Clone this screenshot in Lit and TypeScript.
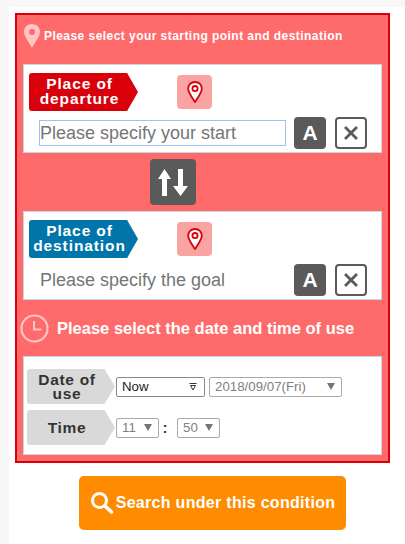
import { LitElement, html, css, svg } from "lit";
import { customElement } from "lit/decorators.js";

const pinIcon = html`<svg width="18" height="24" viewBox="0 0 18 24">
  <path d="M9 2C5 2 2.2 5 2.2 8.8 2.2 12.6 6 17.5 9 22c3-4.500 6.800-9.400 6.800-13.200C15.800 5 13 2 9 2z" fill="#fff" stroke="#d9000b" stroke-width="1.800" stroke-linejoin="round" />
  <circle cx="9" cy="8.600" r="2.600" fill="#fff" stroke="#d9000b" stroke-width="1.800" />
</svg>`;

const clearIcon = svg`<path d="M4 4l10 10M14 4L4 14" stroke="#5a5a5a" stroke-width="2.800" stroke-linecap="square" fill="none" />`;

@customElement("app-root")
export class AppRoot extends LitElement {
  static override styles = css`
    :host {
      display: block;
      height: 544px;
      overflow: hidden;
      background: #f7f7f7;
      font-family: "Liberation Sans", Arial, sans-serif;
    }

    .page {
      margin: 7px 0 0 9px;
      padding: 6px 15px 0 6px;
      height: 537px;
      box-sizing: border-box;
      background: #fff;
    }

    .panel {
      box-sizing: border-box;
      height: 450px;
      border: 2px solid #d9000b;
      background: #ff6b6b;
      padding: 0 6px;
      display: flex;
      flex-direction: column;
    }

    .heading {
      display: flex;
      align-items: center;
      height: 41px;
      margin: 0 0 8px 0;
      color: #fff;
      font-weight: bold;
      font-size: 12px;
      letter-spacing: 0.45px;
      gap: 3px;
    }

    .card {
      box-sizing: border-box;
      height: 89px;
      background: #fff;
      border: 1px solid #c9d6dd;
      padding: 8px 5px 0;
    }

    .top {
      display: flex;
      align-items: center;
      height: 38px;
    }

    .tag {
      box-sizing: border-box;
      width: 109px;
      height: 38px;
      border-radius: 3px 0 0 3px;
      clip-path: polygon(0 0, 90% 0, 100% 50%, 90% 100%, 0 100%);
      display: flex;
      align-items: center;
      justify-content: center;
      text-align: center;
      color: #fff;
      font-weight: bold;
      font-size: 15.5px;
      line-height: 15px;
      letter-spacing: 0.9px;
      padding: 0 8px 2px 0;
    }

    .tag.from {
      background: #d9000b;
    }

    .tag.to {
      background: #0075a9;
    }

    .pin {
      width: 35px;
      height: 34px;
      margin-left: 39px;
      border-radius: 4px;
      background: #f9a3a3;
      display: flex;
      align-items: center;
      justify-content: center;
    }

    .entry {
      display: flex;
      align-items: center;
      height: 32px;
      margin: 6px 0 0 10px;
    }

    input {
      box-sizing: border-box;
      width: 247px;
      height: 26px;
      margin: 0 8px 0 0;
      padding: 0;
      border: 1px solid transparent;
      outline: none;
      background: transparent;
      font: 18px "Liberation Sans", Arial, sans-serif;
    }

    input::placeholder {
      color: #757575;
      opacity: 1;
    }

    input.active {
      border-color: #9fc0f5;
    }

    .btn {
      box-sizing: border-box;
      width: 32px;
      height: 32px;
      border-radius: 4px;
      display: flex;
      align-items: center;
      justify-content: center;
      flex: none;
    }

    .btn.kana {
      background: #5a5a5a;
      color: #fff;
      font-weight: bold;
      font-size: 21px;
      margin-right: 9px;
    }

    .btn.clear {
      background: #fff;
      border: 2px solid #5a5a5a;
    }

    .swap-row {
      display: flex;
      justify-content: center;
      padding: 6px 59px 6px 0;
    }

    .swap {
      width: 46px;
      height: 46px;
      border-radius: 4px;
      background: #5a5a5a;
      display: flex;
      align-items: center;
      justify-content: center;
    }

    .heading.time {
      height: 56px;
      margin: 0 0 0 -3px;
      font-size: 16.5px;
      letter-spacing: 0;
      gap: 8px;
    }

    .card.when {
      height: 99px;
      padding: 12px 3px 0;
      display: flex;
      flex-direction: column;
      gap: 6px;
    }

    .row {
      display: flex;
      align-items: center;
      gap: 1px;
      height: 35px;
    }

    .when-tag {
      box-sizing: border-box;
      width: 88px;
      height: 35px;
      border-radius: 3px 0 0 3px;
      clip-path: polygon(0 0, 88% 0, 100% 50%, 88% 100%, 0 100%);
      background: #d9d9d9;
      color: #333;
      font-weight: bold;
      font-size: 15.5px;
      line-height: 14px;
      letter-spacing: 0.7px;
      display: flex;
      align-items: center;
      justify-content: center;
      text-align: center;
      padding-right: 8px;
      flex: none;
    }

    .select {
      box-sizing: border-box;
      height: 20px;
      border: 1px solid #aaa;
      border-radius: 2px;
      background: #fff;
      color: #808080;
      font-size: 13.3px;
      display: flex;
      align-items: center;
      justify-content: space-between;
      padding: 0 6px 0 5px;
      flex: none;
    }

    .select.now {
      width: 89px;
      margin-right: 3px;
      color: #222;
      border-color: #888;
      padding-right: 7px;
    }

    .select.date {
      width: 133px;
    }

    .select.small {
      width: 43px;
    }

    .arrow {
      width: 0;
      height: 0;
      border-left: 4px solid transparent;
      border-right: 4px solid transparent;
      border-top: 7px solid #757575;
    }

    .colon {
      box-sizing: border-box;
      width: 16px;
      padding-right: 6px;
      text-align: center;
      font-size: 14px;
      font-weight: bold;
      color: #333;
    }

    .search-row {
      display: flex;
      justify-content: center;
      padding: 13px 0 0 20px;
    }

    .search {
      box-sizing: border-box;
      width: 267px;
      height: 54px;
      border-radius: 5px;
      background: #ff8c00;
      color: #fff;
      font-weight: bold;
      font-size: 16px;
      letter-spacing: 0.3px;
      display: flex;
      align-items: center;
      justify-content: center;
      gap: 2px;
    }
  `;

  private _renderPlace(
    kind: "from" | "to",
    lines: string[],
    placeholder: string,
    active: boolean,
  ) {
    return html`
      <div class="card">
        <div class="top">
          <div class="tag ${kind}">${lines[0]}<br />${lines[1]}</div>
          <div class="pin">${pinIcon}</div>
        </div>
        <div class="entry">
          <input class=${active ? "active" : ""} placeholder=${placeholder} />
          <div class="btn kana">A</div>
          <div class="btn clear">
            <svg width="18" height="18" viewBox="0 0 18 18">${clearIcon}</svg>
          </div>
        </div>
      </div>
    `;
  }

  override render() {
    return html`
      <div class="page">
        <div class="panel">
          <div class="heading">
            <svg width="18" height="26" viewBox="0 0 18 26">
              <path
                fill-rule="evenodd"
                d="M9 1C4.300 1 1 4.600 1 8.800 1 13.500 6.500 20 9 25c2.500-5 8-11.500 8-16.200C17 4.600 13.700 1 9 1zm0 5a3 3 0 1 1 0 6 3 3 0 0 1 0-6z"
                fill="#ffc4c4"
              />
            </svg>
            Please select your starting point and destination
          </div>

          ${this._renderPlace("from", ["Place of", "departure"], "Please specify your start", true)}

          <div class="swap-row">
            <div class="swap">
              <svg width="32" height="32" viewBox="0 0 32 32">
                <path d="M7.500 3L1 13h4v17h5V13h4z" fill="#fff" />
                <path d="M23.500 30L31 20h-5V3h-5v17h-5z" fill="#fff" />
              </svg>
            </div>
          </div>

          ${this._renderPlace("to", ["Place of", "destination"], "Please specify the goal", false)}

          <div class="heading time">
            <svg width="29" height="29" viewBox="0 0 29 29">
              <circle cx="14.500" cy="14.500" r="13" fill="none" stroke="#ffc4c4" stroke-width="2.200" />
              <path d="M14 7v8.500h7.500" fill="none" stroke="#ffc4c4" stroke-width="2" />
            </svg>
            Please select the date and time of use
          </div>

          <div class="card when">
            <div class="row">
              <div class="when-tag">Date of<br />use</div>
              <div class="select now">
                Now
                <svg width="8" height="8" viewBox="0 0 8 8">
                  <path d="M0.500 0.500h7M1.500 2.500h5L4 7z" fill="none" stroke="#333" stroke-width="1" />
                </svg>
              </div>
              <div class="select date">2018/09/07(Fri)<span class="arrow"></span></div>
            </div>
            <div class="row">
              <div class="when-tag">Time</div>
              <div class="select small">11<span class="arrow"></span></div>
              <div class="colon">:</div>
              <div class="select small">50<span class="arrow"></span></div>
            </div>
          </div>
        </div>

        <div class="search-row">
          <div class="search">
            <svg width="24" height="24" viewBox="0 0 24 24">
              <circle cx="9.500" cy="9.500" r="7" fill="none" stroke="#fff" stroke-width="3" />
              <path d="M15 15l6.500 6" stroke="#fff" stroke-width="3.600" stroke-linecap="round" />
            </svg>
            Search under this condition
          </div>
        </div>
      </div>
    `;
  }
}
